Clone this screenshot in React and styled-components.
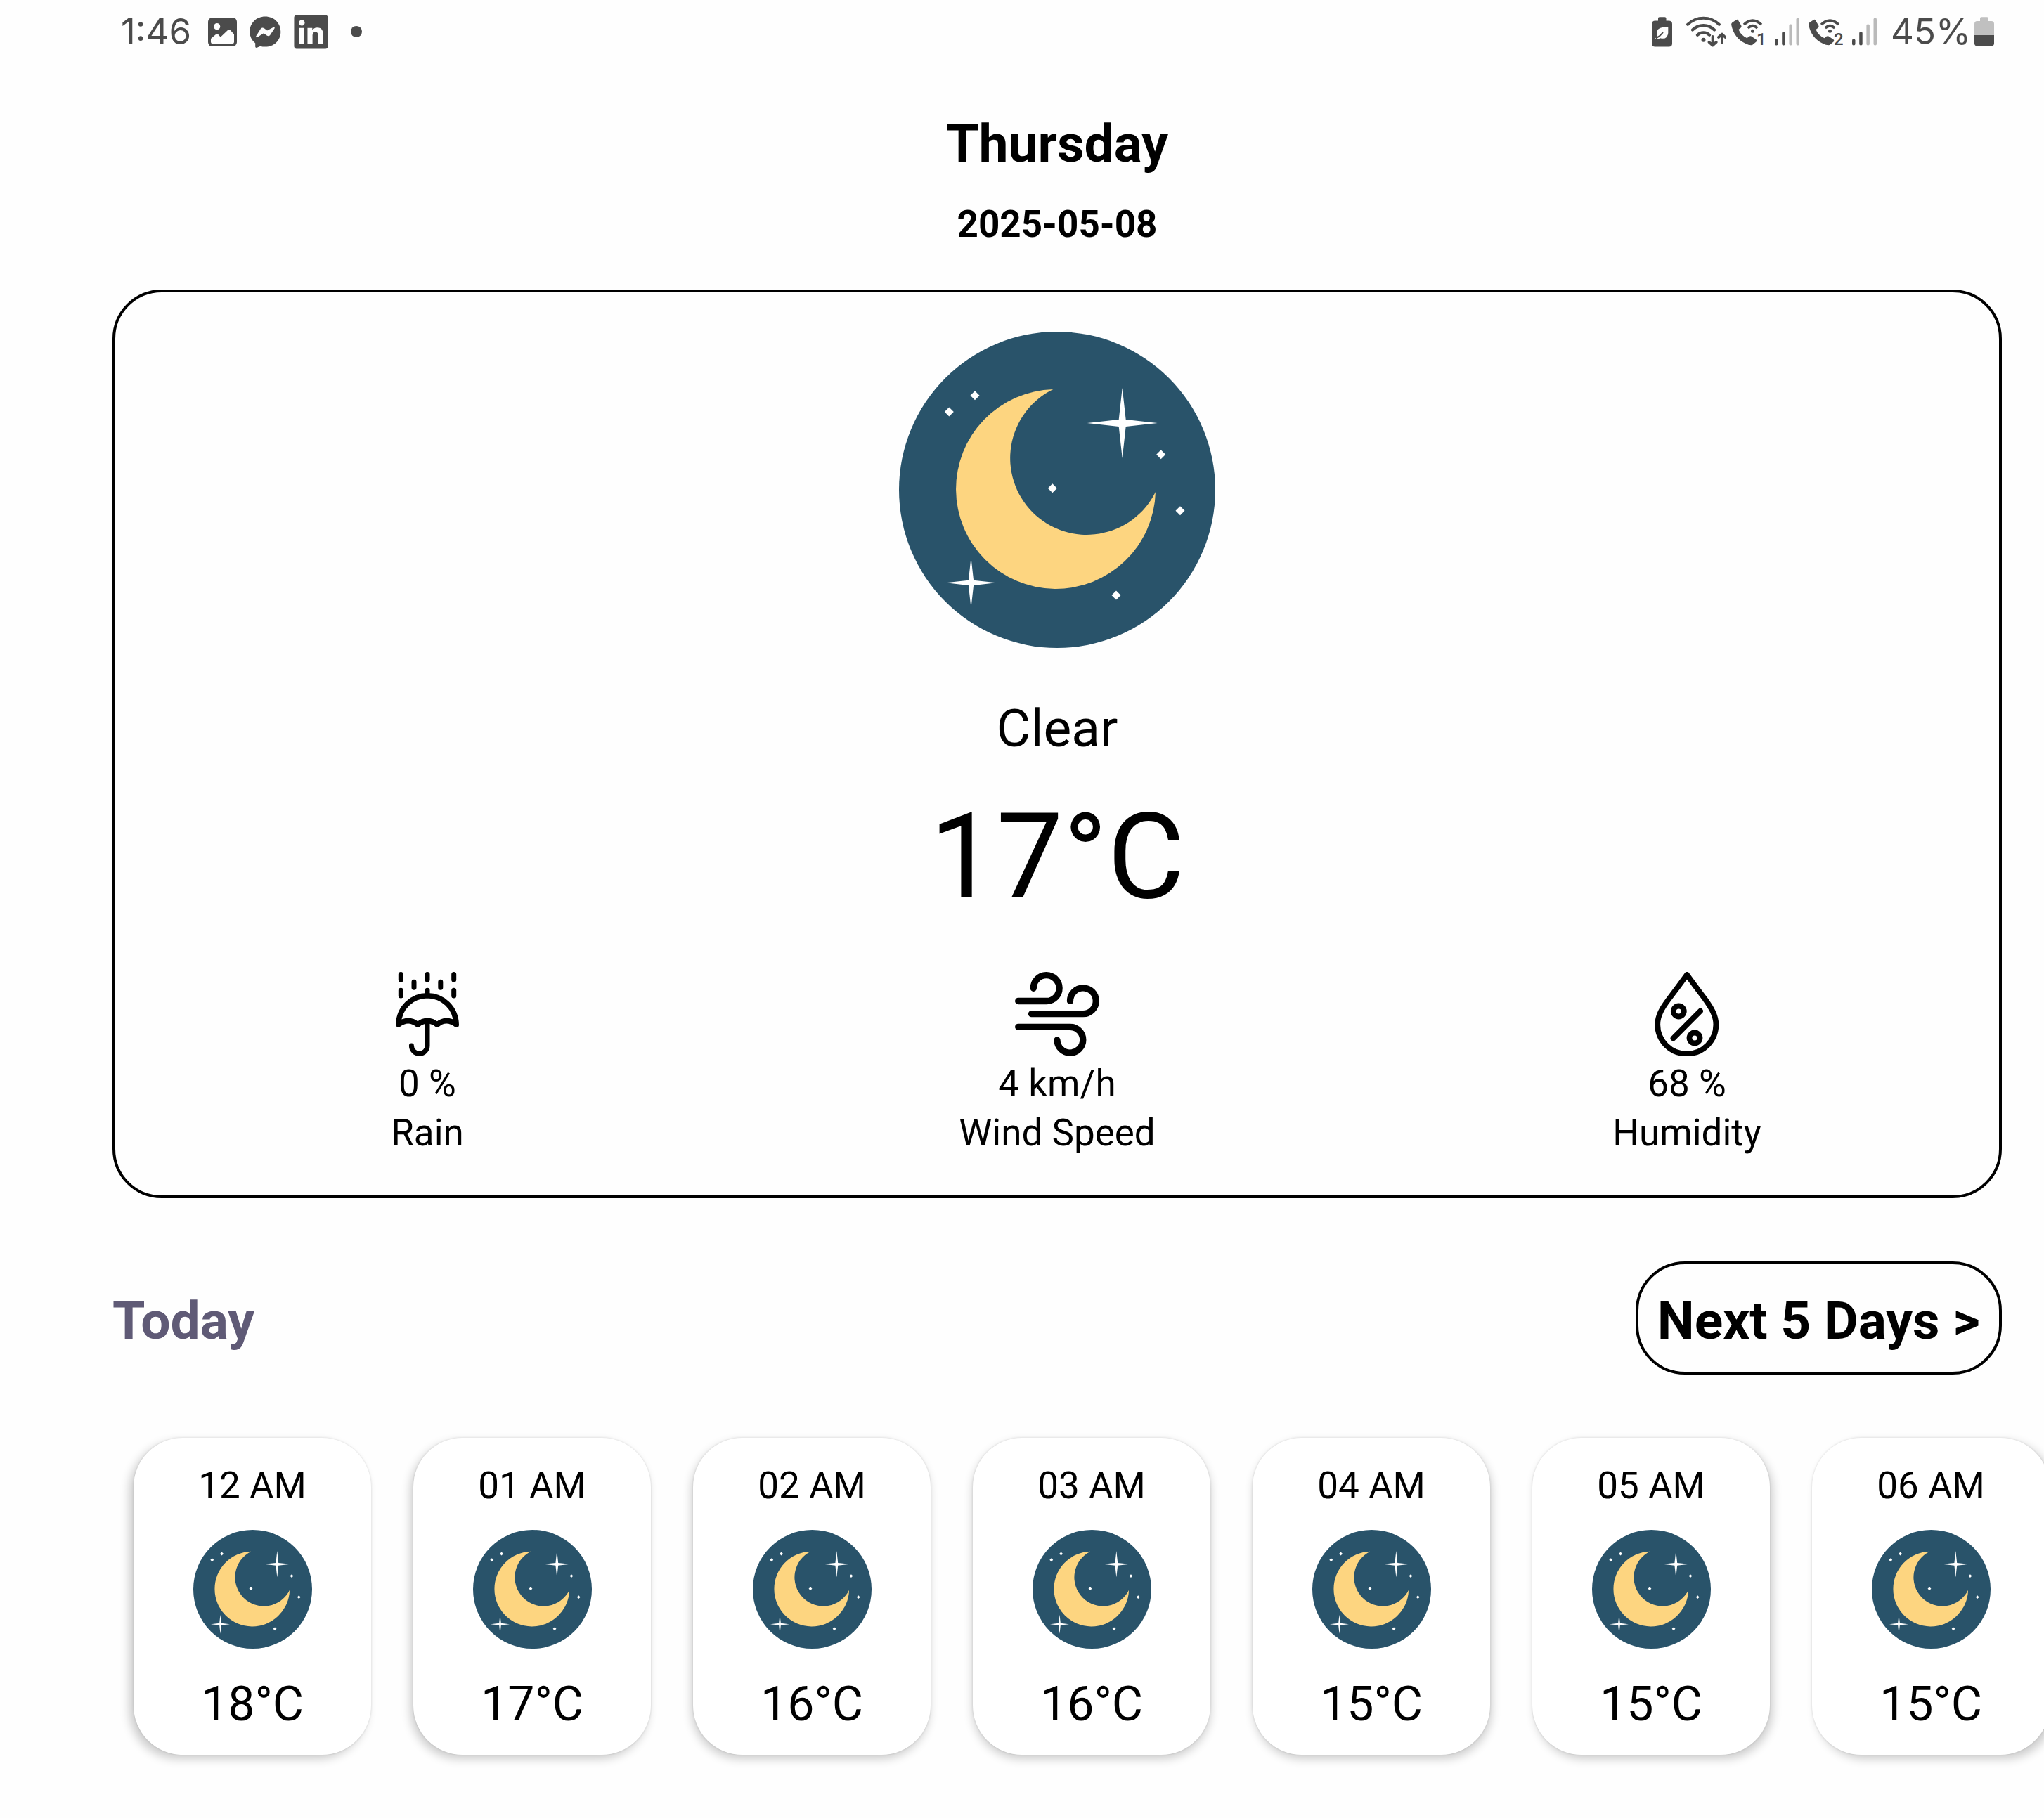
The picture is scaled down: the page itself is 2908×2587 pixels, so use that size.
import React from "react";
import styled, { createGlobalStyle } from "styled-components";
import { FaLinkedin } from "react-icons/fa";

const INK = "#4b4b4b";
const FAINT = "#bababa";

const GlobalStyle = createGlobalStyle`
  *, *::before, *::after { box-sizing: border-box; }
  body {
    margin: 0;
    background: #fefefe;
    color: #000;
    font-family: Roboto, "Liberation Sans", sans-serif;
  }
  h1, h2, p, ul { margin: 0; padding: 0; }
  svg { display: block; flex: none; }
`;

const Screen = styled.div`
  min-height: 100vh;
  overflow: hidden;
`;

/* Status bar */

const StatusBar = styled.header`
  display: flex;
  justify-content: space-between;
  align-items: center;
  height: 90px;
  padding: 0 71px 0 172px;
  color: ${INK};
`;

const StatusGroup = styled.div`
  display: flex;
  align-items: center;
  gap: ${(p) => p.$gap}px;
`;

const StatusText = styled.span`
  font-family: Inter, Roboto, sans-serif;
  font-size: 51px;
  line-height: 62px;
  font-weight: 400;
`;

const MoreDot = styled.span`
  width: 16px;
  height: 16px;
  margin-left: 14px;
  border-radius: 50%;
  background: ${INK};
`;

/* Page */

const Page = styled.main`
  display: flex;
  flex-direction: column;
  padding: 70px 60px 0 160px;
`;

const Heading = styled.div`
  display: flex;
  flex-direction: column;
  align-items: center;
  gap: 40px;
`;

const Title = styled.h1`
  font-size: 75px;
  line-height: 88px;
  font-weight: 700;
`;

const DateText = styled.p`
  font-size: 53px;
  line-height: 62px;
  font-weight: 700;
`;

const CurrentCard = styled.section`
  display: flex;
  flex-direction: column;
  align-items: center;
  margin-top: 62px;
  padding: 56px 0 58px;
  border: 4px solid #000;
  border-radius: 70px;
`;

const Condition = styled.p`
  margin-top: 70px;
  font-size: 75px;
  line-height: 88px;
`;

const Temperature = styled.p`
  margin-top: 40px;
  font-size: 169px;
  line-height: 198px;
`;

const Stats = styled.ul`
  display: grid;
  grid-template-columns: repeat(3, 1fr);
  align-self: stretch;
  margin: 65px -4px 0;
  list-style: none;
`;

const Stat = styled.li`
  display: flex;
  flex-direction: column;
  align-items: center;
  gap: 8px;
`;

const StatText = styled.span`
  font-size: 53px;
  line-height: 62px;
`;

const TodayRow = styled.div`
  display: flex;
  justify-content: space-between;
  align-items: baseline;
  margin-top: 90px;
`;

const TodayTitle = styled.h2`
  font-size: 75px;
  line-height: 88px;
  font-weight: 700;
  color: #5f5a76;
`;

const NextButton = styled.button`
  padding: 36px 27px 29px;
  border: 4px solid #000;
  border-radius: 70px;
  background: transparent;
  color: #000;
  font-family: inherit;
  font-size: 75px;
  line-height: 88px;
  font-weight: 700;
  cursor: pointer;
`;

const Hours = styled.ul`
  display: flex;
  gap: 60px;
  margin: 50px -60px 0 -40px;
  padding: 40px 60px 40px 70px;
  list-style: none;
  overflow-x: auto;
  scrollbar-width: none;
`;

const HourCard = styled.li`
  display: flex;
  flex: none;
  flex-direction: column;
  align-items: center;
  width: 338px;
  padding: 37px 0 32px;
  border-radius: 70px;
  background: #fff;
  box-shadow:
    ${(p) => p.$shift}px 6px 14px rgba(0, 0, 0, 0.2),
    0 0 3px rgba(0, 0, 0, 0.14);
`;

const HourLabel = styled.span`
  margin-bottom: 32px;
  font-size: 53px;
  line-height: 62px;
`;

const HourTemp = styled.span`
  margin-top: 39px;
  font-size: 68px;
  line-height: 80px;
`;

/* Drawings */

function ClearNight({ size, label }) {
  const spark = (cx, cy, arm, w) => (
    <path
      fill="#fff"
      d={`M${cx} ${cy - arm}L${cx + w} ${cy - w}L${cx + arm} ${cy}L${cx + w} ${cy + w}L${cx} ${cy + arm}L${cx - w} ${cy + w}L${cx - arm} ${cy}L${cx - w} ${cy - w}Z`}
    />
  );
  const dots = [[108, 90.7], [71.3, 114], [218.3, 222.7], [372.7, 174.7], [400, 254.7], [309, 375]];
  return (
    <svg width={size} height={size} viewBox="0 0 450 450" role="img" aria-label={label}>
      <circle cx="225" cy="225" r="225" fill="#29536a" />
      <path d="M219.3 82A142 142 0 1 0 365 228A109 109 0 1 1 219.3 82Z" fill="#fdd580" />
      {spark(317.7, 130, 50, 5)}
      {spark(102.5, 357.3, 36, 3.6)}
      {dots.map(([x, y]) => (
        <path key={x} fill="#fff" d={`M${x} ${y - 6.5}l6.5 6.5l-6.5 6.5l-6.5 -6.5Z`} />
      ))}
    </svg>
  );
}

const StatSvg = ({ children, stroke }) => (
  <svg width="120" height="120" viewBox="0 0 120 120" fill="none" stroke="#000" strokeWidth={stroke} strokeLinecap="round" strokeLinejoin="round" aria-hidden="true">
    {children}
  </svg>
);

const RainIcon = () => (
  <StatSvg stroke={7}>
    <path d="M22.3 3.5V11M60 3.5V11M97.7 3.5V11M41 14.2V22.2M78.8 14.2V22.2M22.3 26.2V34M60 26.2V34M97.7 26.2V34" />
    <path strokeWidth="7.6" d="M18.8 75C19.5 51 38 33.8 60 33.8S100.5 51 101.2 75Q87 64 74 75Q60 64 46.3 75Q33 64 18.8 75Z" />
    <path d="M60 70V105A11.3 11.3 0 0 1 37.4 105" />
  </StatSvg>
);

const WindIcon = () => (
  <StatSvg stroke={9.3}>
    <path d="M4.7 41.5H45A18.4 18.4 0 1 0 26.3 23.3" />
    <path d="M23.5 59.7H97A18.4 18.4 0 1 0 78.5 41.5" />
    <path d="M4.7 78.3H78.5A18.4 18.4 0 1 1 60 97" />
  </StatSvg>
);

const HumidityIcon = () => (
  <StatSvg stroke={7.8}>
    <path d="M60 4Q47 22 34 39C25 51 18.2 62 18.2 75A41.6 41.6 0 0 0 101.4 75C101.4 62 94.5 51 86 39Q73 22 60 4Z" />
    <circle cx="48.3" cy="56" r="7.5" />
    <circle cx="71" cy="94" r="7.5" />
    <path d="M79 55.7L40.5 94.5" />
  </StatSvg>
);

const GalleryIcon = () => (
  <svg width="46" height="46" viewBox="0 0 46 46" aria-hidden="true">
    <rect x="2" y="3" width="41" height="41" rx="6" fill={INK} />
    <circle cx="14.7" cy="15.7" r="4.6" fill="#fefefe" />
    <path d="M6 33L13 27Q14.7 25.6 16.5 27L19.7 30.7L30 21Q32 19.5 34 21.3L39 26.8V37.5Q39 40 36.5 40H8.5Q6 40 6 37.5Z" fill="#fefefe" />
  </svg>
);

const MessengerIcon = () => (
  <svg width="45" height="46" viewBox="0 0 45 46" aria-hidden="true">
    <path d="M22.3 1.6C35 1.6 44.3 11 44.3 23.2S35 44.6 22.3 44.6Q18.5 44.6 15.3 43.7L10 45.9Q8.3 46 8.2 44.5V39.5Q0.3 33 0.3 23.2C0.3 11 9.7 1.6 22.3 1.6Z" fill={INK} />
    <path d="M9.2 29.5L16 18.8Q18 16.6 20.5 18L24.5 21Q25.2 21.4 26 21L34.5 16.5Q36.5 16 35.5 18.5L29 28.2Q27.2 30 25 28.8L20.8 25.8Q20 25.4 19.2 25.8L10.7 31.2Q8.6 31.6 9.2 29.5Z" fill="#fefefe" />
  </svg>
);

const PowerSaveIcon = () => (
  <svg width="29" height="50" viewBox="0 0 29 50" aria-hidden="true">
    <path d="M9 9.5V6Q9 4.3 11 4.3H18.5Q20.5 4.3 20.5 6V9.5H24Q29 9.5 29 14V42Q29 46.5 24 46.5H5Q0 46.5 0 42V14Q0 9.5 5 9.5Z" fill={INK} />
    <path d="M23.3 19H15Q7 20 7 27.5Q7 31 8 33L4 34.5L4.5 36Q9 36.5 12 34.3Q22 37 23.3 27Z" fill="#fefefe" />
    <path d="M15.5 26.5Q12 31.5 6.5 34" stroke={INK} strokeWidth="2" fill="none" strokeLinecap="round" />
  </svg>
);

const WifiIcon = () => (
  <svg width="57" height="50" viewBox="0 0 57 50" fill="none" stroke={INK} strokeWidth="4.2" strokeLinecap="round" strokeLinejoin="round" aria-hidden="true">
    <path d="M2.2 14.8A32 32 0 0 1 46.8 14.8M9 22.5A22 22 0 0 1 40 22.5M16 29.8A12 12 0 0 1 33 29.8" />
    <circle cx="24.5" cy="36.8" r="3" fill={INK} stroke="none" />
    <path strokeWidth="3.8" d="M37.6 32V44.5M32.5 40L37.6 44.6L42.7 40M51 41V29M46 33L51 28.5L55.5 33" />
  </svg>
);

const CallIcon = ({ sim }) => (
  <svg width="49" height="50" viewBox="0 0 49 50" aria-hidden="true">
    <path d="M9.5 8Q8.5 7.2 7.2 8.2L1.5 12Q-0.2 13.2 0.2 15.5Q4 34.5 21 42.3Q26 44.7 30 44L35.5 39.5Q37 38 35.5 36.3L28.5 31.6Q27 30.6 25.5 31.8L22.5 34.3Q13.5 30 10.5 22L13.5 19.8Q15.2 18.3 14.2 16.3Z" fill={INK} />
    <path d="M18 15Q30.5 3.5 43 15M23.7 20Q30.5 13.5 37.3 20" fill="none" stroke={INK} strokeWidth="3.6" />
    <circle cx="30.5" cy="24.2" r="2.5" fill={INK} />
    <text x="36" y="44" fontFamily="Roboto, sans-serif" fontSize="24" fontWeight="500" fill={INK}>{sim}</text>
  </svg>
);

const SignalIcon = () => (
  <svg width="35" height="50" viewBox="0 0 35 50" aria-hidden="true">
    <rect x="0" y="35.5" width="4.5" height="9" rx="2" fill={INK} />
    <rect x="10.2" y="25" width="4.5" height="19.5" rx="2" fill={INK} />
    <rect x="20.4" y="14.6" width="4.5" height="29.9" rx="2" fill={FAINT} />
    <rect x="30.5" y="5.6" width="4.5" height="38.9" rx="2" fill={FAINT} />
  </svg>
);

const BatteryIcon = () => (
  <svg width="28" height="50" viewBox="0 0 28 50" aria-hidden="true">
    <path d="M8 10V6Q8 4.3 10 4.3H18Q20 4.3 20 6V10H24Q28 10 28 14V30H0V14Q0 10 4 10Z" fill="#c0c0c0" />
    <path d="M0 30H28V41.5Q28 45.5 24 45.5H4Q0 45.5 0 41.5Z" fill={INK} />
  </svg>
);

/* Data */

const stats = [
  { Icon: RainIcon, value: "0 %", label: "Rain" },
  { Icon: WindIcon, value: "4 km/h", label: "Wind Speed" },
  { Icon: HumidityIcon, value: "68 %", label: "Humidity" },
];

const hours = [
  ["12 AM", "18°C"],
  ["01 AM", "17°C"],
  ["02 AM", "16°C"],
  ["03 AM", "16°C"],
  ["04 AM", "15°C"],
  ["05 AM", "15°C"],
  ["06 AM", "15°C"],
];

export default function App() {
  return (
    <Screen>
      <GlobalStyle />
      <StatusBar>
        <StatusGroup $gap={22}>
          <StatusText>1:46</StatusText>
          <StatusGroup $gap={15}>
            <GalleryIcon />
            <MessengerIcon />
            <FaLinkedin size={55} color={INK} aria-hidden="true" />
            <MoreDot />
          </StatusGroup>
        </StatusGroup>
        <StatusGroup $gap={20}>
          <PowerSaveIcon />
          <StatusGroup $gap={7}>
            <WifiIcon />
            <StatusGroup $gap={13}>
              <CallIcon sim="1" />
              <SignalIcon />
              <CallIcon sim="2" />
              <SignalIcon />
            </StatusGroup>
          </StatusGroup>
          <StatusGroup $gap={5}>
            <StatusText>45%</StatusText>
            <BatteryIcon />
          </StatusGroup>
        </StatusGroup>
      </StatusBar>

      <Page>
        <Heading>
          <Title>Thursday</Title>
          <DateText>2025-05-08</DateText>
        </Heading>

        <CurrentCard>
          <ClearNight size={450} label="Clear night" />
          <Condition>Clear</Condition>
          <Temperature>17°C</Temperature>
          <Stats>
            {stats.map(({ Icon, value, label }) => (
              <Stat key={label}>
                <Icon />
                <StatText>{value}</StatText>
                <StatText>{label}</StatText>
              </Stat>
            ))}
          </Stats>
        </CurrentCard>

        <TodayRow>
          <TodayTitle>Today</TodayTitle>
          <NextButton type="button">Next 5 Days &gt;</NextButton>
        </TodayRow>

        <Hours>
          {hours.map(([time, temp], i) => (
            <HourCard key={time} $shift={(i - 3) * 2}>
              <HourLabel>{time}</HourLabel>
              <ClearNight size={169} label="Clear night" />
              <HourTemp>{temp}</HourTemp>
            </HourCard>
          ))}
        </Hours>
      </Page>
    </Screen>
  );
}
